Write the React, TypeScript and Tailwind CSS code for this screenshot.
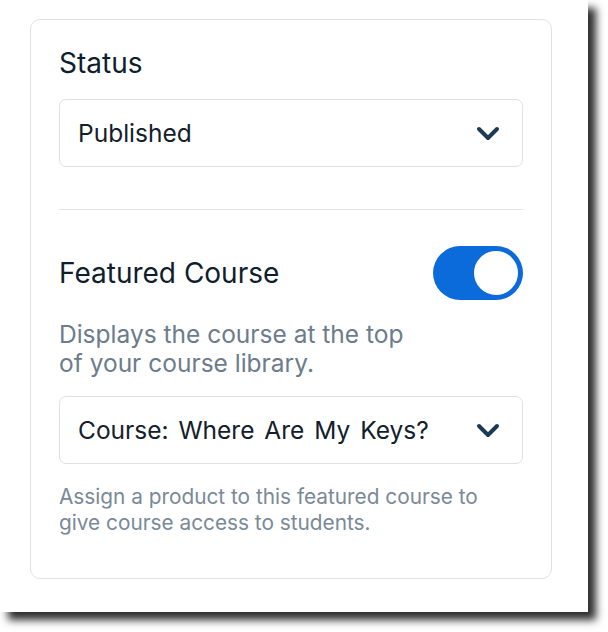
import React from "react";

function Chevron() {
  return (
    <svg width="24" height="15" viewBox="0 0 24 15" fill="none" className="shrink-0">
      <path d="M3 3l9 9 9-9" stroke="#1b3a55" strokeWidth="4" strokeLinecap="round" strokeLinejoin="round" />
    </svg>
  );
}

function Select({ value }: { value: string }) {
  return (
    <div className="flex h-[68px] items-center justify-between rounded-[7px] border border-[#dfe2e5] bg-white pl-[18px] pr-[22px]">
      <span className="text-[24.5px] text-[#13202c] [word-spacing:3px]">{value}</span>
      <Chevron />
    </div>
  );
}

export default function App() {
  return (
    <div className="h-[632px] w-[608px] bg-white" style={{ fontFamily: "Inter, 'Noto Sans', sans-serif" }}>
      <div className="h-[612px] w-[588px] bg-white pl-[30px] pt-[19px] shadow-[8px_8px_8px_rgba(0,0,0,0.82)]">
        <div className="h-[560px] w-[522px] rounded-[10px] border border-[#e0e2e5] px-7 pt-[25px]">
          <h2 className="text-[28px] leading-[36px] text-[#0f1e2d]">Status</h2>
          <div className="mt-[18px]">
            <Select value="Published" />
          </div>
          <div className="mt-[42px] h-px bg-[#e2e4e7]" />
          <div className="mt-9 flex items-center justify-between">
            <span className="text-[28px] text-[#0f1e2d]">Featured Course</span>
            <div className="flex h-[54px] w-[90px] items-center justify-end rounded-full bg-[#0b6bdb] p-[3px]">
              <div className="h-[48px] w-[48px] rounded-full border-2 border-[#0b6bdb] bg-white" />
            </div>
          </div>
          <p className="mt-[20px] text-[24.5px] leading-[29px] text-[#6c7c8c]">
            Displays the course at the top
            <br />
            of your course library.
          </p>
          <div className="mt-[18px]">
            <Select value="Course: Where Are My Keys?" />
          </div>
          <p className="mt-[20px] text-[20.8px] leading-[26px] text-[#7a8997]">
            Assign a product to this featured course to
            <br />
            give course access to students.
          </p>
        </div>
      </div>
    </div>
  );
}
